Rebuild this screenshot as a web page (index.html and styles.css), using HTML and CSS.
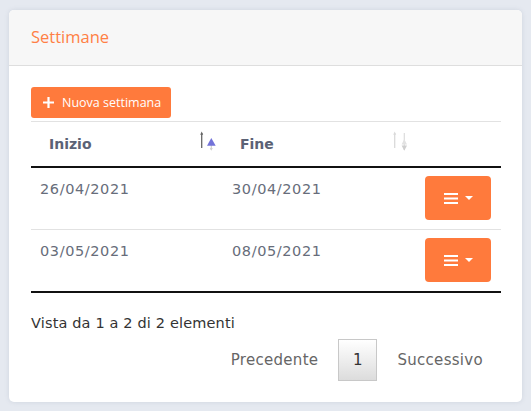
FILE: index.html
```html
<!DOCTYPE html>
<html lang="it">
<head>
<meta charset="utf-8">
<title>Settimane</title>
<link rel="stylesheet" href="styles.css">
</head>
<body>
<div class="card">
  <div class="card-header">Settimane</div>
  <div class="card-body">
    <button class="btn-new"><svg class="plus" width="11" height="11" viewBox="0 0 11 11"><path d="M5.5 0v11M0 5.5h11" stroke="#fff" stroke-width="2.2"/></svg>Nuova settimana</button>
    <table class="tbl">
      <thead>
        <tr>
          <th class="c1"><div class="th-in"><span>Inizio</span>
            <svg class="sort" width="17" height="20" viewBox="0 0 17 20">
              <path d="M1.7 17V2" stroke="#666" stroke-width="1.3"/>
              <path d="M0.2 3.8L1.7 0.6 3.2 3.8z" fill="#666"/>
              <path d="M11.3 14V19" stroke="#d0d0d0" stroke-width="1.2"/>
              <path d="M9.8 17L11.3 19.8 12.8 17z" fill="#d0d0d0"/>
              <path d="M7 14.7L11.3 7 15.7 14.7z" fill="#7373d9"/>
            </svg></div></th>
          <th class="c2"><div class="th-in"><span>Fine</span>
            <svg class="sort" width="17" height="20" viewBox="0 0 17 20">
              <path d="M1.7 17V2" stroke="#dadada" stroke-width="1.3"/>
              <path d="M0.2 3.8L1.7 0.6 3.2 3.8z" fill="#dadada"/>
              <path d="M11.3 2V19" stroke="#dcdcdc" stroke-width="1.2"/>
              <path d="M8.6 14.5L11.3 19.8 14 14.5z" fill="#cfcfcf"/>
              <path d="M8.6 13.5L11.3 8 14 13.5z" fill="#e2e2e2"/>
            </svg></div></th>
          <th class="c3"></th>
        </tr>
      </thead>
      <tbody>
        <tr>
          <td>26/04/2021</td>
          <td>30/04/2021</td>
          <td class="act"><button class="btn-menu"><svg width="14" height="11" viewBox="0 0 14 11"><path d="M0 1h14M0 5.5h14M0 10h14" stroke="#fff" stroke-width="2"/></svg><span class="caret"></span></button></td>
        </tr>
        <tr>
          <td>03/05/2021</td>
          <td>08/05/2021</td>
          <td class="act"><button class="btn-menu"><svg width="14" height="11" viewBox="0 0 14 11"><path d="M0 1h14M0 5.5h14M0 10h14" stroke="#fff" stroke-width="2"/></svg><span class="caret"></span></button></td>
        </tr>
      </tbody>
    </table>
    <div class="info">Vista da 1 a 2 di 2 elementi</div>
    <div class="pager">
      <span class="pg-link">Precedente</span>
      <span class="pg-cur">1</span>
      <span class="pg-link">Successivo</span>
    </div>
  </div>
</div>
</body>
</html>
```
FILE: styles.css
```css
html, body {
  margin: 0;
  background: #e5e9f0;
}
body {
  padding: 10px 9px 9px 9px;
  font-family: "DejaVu Sans", "Noto Sans", sans-serif;
}
.card {
  width: 513px;
  height: 392px;
  background: #fff;
  border-radius: 5px;
  box-shadow: 0 0 4px rgba(140, 150, 170, 0.25);
  overflow: hidden;
  box-sizing: border-box;
}
.card-header {
  height: 56px;
  box-sizing: border-box;
  background: #f7f7f7;
  border-bottom: 1px solid #dedede;
  padding: 0 22px 3px;
  display: flex;
  align-items: center;
  color: #ff7f45;
  font-family: "Open Sans", sans-serif;
  font-size: 16.5px;
}
.card-body {
  padding: 21px 21px 0 22px;
}
.btn-new {
  display: flex;
  align-items: center;
  gap: 8px;
  height: 31px;
  width: 140px;
  padding: 0 0 0 12px;
  border: none;
  border-radius: 3px;
  background: #ff7a3c;
  color: #fff;
  font-family: "Open Sans", sans-serif;
  font-size: 12.5px;
  cursor: pointer;
}
.plus { display: block; }
.tbl {
  margin-top: 3px;
  width: 100%;
  border-collapse: collapse;
  border-top: 1px solid #e2e2e2;
  table-layout: fixed;
}
.tbl th {
  height: 44px;
  padding: 0;
  text-align: left;
  color: #5b6275;
  font-size: 14px;
  font-weight: bold;
  border-bottom: 2px solid #111;
}
.c1 { width: 191px; }
.c2 { width: 193px; }
.th-in {
  display: flex;
  align-items: center;
  justify-content: space-between;
  padding: 0 5px 0 18px;
}
.sort { display: block; margin-top: -6px; }
.tbl td {
  padding: 13px 10px 5px;
  vertical-align: top;
  color: #676d7a;
  font-size: 14.5px;
  letter-spacing: 0.6px;
  border-bottom: 1px solid #e2e2e2;
  height: 43px;
}
.tbl td:first-child { padding-left: 9px; }
.tbl tbody tr:last-child td { border-bottom: 2px solid #111; }
.tbl td.act {
  padding: 8px 10px 8px 0;
  text-align: right;
}
.btn-menu {
  display: inline-flex;
  align-items: center;
  justify-content: center;
  gap: 7px;
  width: 66px;
  height: 44px;
  border: none;
  border-radius: 4px;
  background: #ff7a3c;
  cursor: pointer;
  padding: 0;
}
.btn-menu svg { display: block; }
.caret {
  width: 0;
  height: 0;
  border-left: 4.5px solid transparent;
  border-right: 4.5px solid transparent;
  border-top: 4px solid #fff;
}
.info {
  margin-top: 22px;
  font-size: 14.5px;
  letter-spacing: 0.15px;
  color: #333;
}
.pager {
  display: flex;
  justify-content: flex-end;
  align-items: center;
  margin-top: 8px;
  padding-right: 18px;
  font-size: 15px;
  letter-spacing: 0.3px;
}
.pg-link {
  color: #666;
}
.pg-link:first-child { margin-right: 20px; }
.pg-link:last-child { margin-left: 20px; }
.pg-cur {
  width: 39px;
  height: 42px;
  box-sizing: border-box;
  display: flex;
  align-items: center;
  justify-content: center;
  border: 1px solid #c8c8c8;
  background: linear-gradient(#fff, #dcdcdc);
  color: #333;
  letter-spacing: 0;
}
```
